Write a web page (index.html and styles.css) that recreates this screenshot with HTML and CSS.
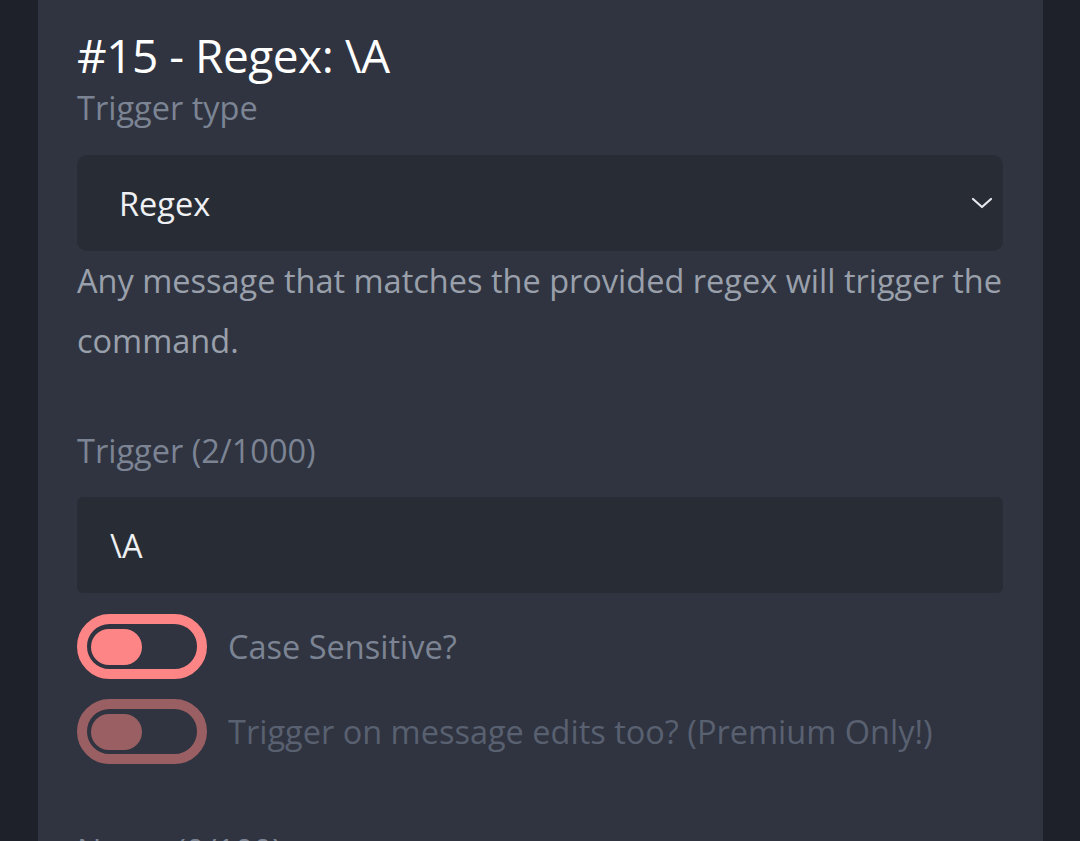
FILE: index.html
```html
<!DOCTYPE html>
<html>
<head>
<meta charset="utf-8">
<link rel="stylesheet" href="styles.css">
</head>
<body>
<div class="page">
  <main class="card">
    <h1 class="title">#15 - Regex: \A</h1>
    <div class="field">
      <label class="label">Trigger type</label>
      <div class="select">
        <span>Regex</span>
        <svg class="chev" width="22" height="14" viewBox="0 0 22 14"><path d="M2 3 L11 11 L20 3" fill="none" stroke="#e6e8ec" stroke-width="2.2" stroke-linecap="round" stroke-linejoin="round"/></svg>
      </div>
      <p class="desc">Any message that matches the provided regex will trigger the command.</p>
    </div>
    <div class="field field-trigger">
      <label class="label">Trigger (2/1000)</label>
      <div class="input">\A</div>
      <div class="toggles">
        <div class="toggle-row">
          <span class="toggle"><span class="knob"></span></span>
          <span class="toggle-label">Case Sensitive?</span>
        </div>
        <div class="toggle-row disabled">
          <span class="toggle"><span class="knob"></span></span>
          <span class="toggle-label">Trigger on message edits too? (Premium Only!)</span>
        </div>
      </div>
    </div>
    <div class="field field-name">
      <label class="label">Name (0/100)</label>
    </div>
  </main>
</div>
</body>
</html>
```
FILE: styles.css
```css
html, body {
  margin: 0;
  padding: 0;
  background: #1e2129;
  height: 100%;
  overflow: hidden;
}
.page {
  display: flex;
  padding-left: 38px;
  width: 1080px;
  box-sizing: border-box;
  height: 841px;
}
.card {
  width: 1005px;
  background: #2f3440;
  padding: 25px 40px 0 39px;
  box-sizing: border-box;
  font-family: "Open Sans", "Noto Sans", sans-serif;
  display: flex;
  flex-direction: column;
}
.title {
  margin: 0;
  font-weight: 400;
  font-size: 46px;
  line-height: 61px;
  color: #ffffff;
  letter-spacing: -0.5px;
}
.label {
  display: block;
  font-size: 32.5px;
  line-height: 44px;
  color: #7c8494;
}
.select {
  margin-top: 25px;
  height: 96px;
  background: #282c35;
  border-radius: 10px;
  display: flex;
  align-items: center;
  justify-content: space-between;
  padding: 0 10px 0 42px;
  color: #eef0f3;
  font-size: 32.5px;
}
.desc {
  margin: 0;
  font-size: 32.5px;
  line-height: 60px;
  color: #9aa0ab;
}
.field-trigger {
  margin-top: 58px;
}
.input {
  margin-top: 24px;
  height: 96px;
  background: #282c35;
  border-radius: 6px;
  display: flex;
  align-items: center;
  padding: 0 33px;
  color: #eef0f3;
  font-size: 32.5px;
}
.toggles {
  margin-top: 21px;
  display: flex;
  flex-direction: column;
  gap: 20px;
}
.toggle-row {
  display: flex;
  align-items: center;
  gap: 21px;
}
.toggle {
  width: 130px;
  height: 65px;
  box-sizing: border-box;
  border: 10px solid #fe8585;
  border-radius: 33px;
  display: flex;
  align-items: center;
  padding-left: 4px;
}
.knob {
  width: 51px;
  height: 36px;
  border-radius: 18px;
  background: #fe8585;
}
.toggle-label {
  font-size: 32.5px;
  color: #7c8494;
}
.disabled .toggle {
  border-color: #9a5f63;
}
.disabled .knob {
  background: #9a5f63;
}
.disabled .toggle-label {
  color: #596070;
}
.field-name {
  margin-top: 65px;
}
```
